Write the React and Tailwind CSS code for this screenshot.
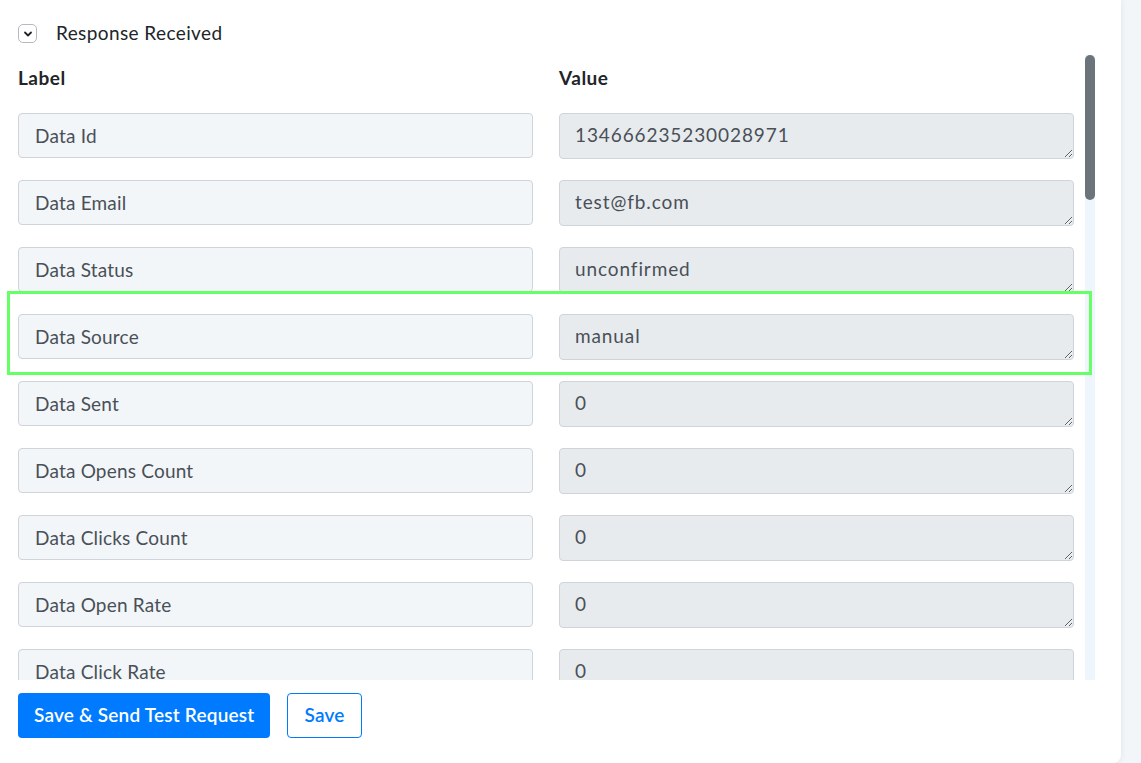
import React from 'react';

const rows = [
  { label: 'Data Id', value: '134666235230028971' },
  { label: 'Data Email', value: 'test@fb.com' },
  { label: 'Data Status', value: 'unconfirmed' },
  { label: 'Data Source', value: 'manual' },
  { label: 'Data Sent', value: '0' },
  { label: 'Data Opens Count', value: '0' },
  { label: 'Data Clicks Count', value: '0' },
  { label: 'Data Open Rate', value: '0' },
  { label: 'Data Click Rate', value: '0' },
];

function Chevron() {
  return (
    <svg width="10" height="10" viewBox="0 0 10 10" fill="none">
      <path d="M2 3.5 L5 6.5 L8 3.5" stroke="#1f2329" strokeWidth="1.8" strokeLinecap="round" strokeLinejoin="round" />
    </svg>
  );
}

export default function App() {
  return (
    <div
      className="relative flex h-[763px] w-[1141px] overflow-hidden bg-[#f3f6f9] text-[#212529]"
      style={{ fontFamily: 'Lato, "Open Sans", sans-serif' }}
    >
      <div className="flex w-[1121px] flex-col rounded-br-lg bg-white shadow-[0_0_6px_rgba(0,0,0,0.08)]">
        {/* Section toggle */}
        <div className="flex items-center gap-[19px] pl-[18px] pt-[24px]">
          <button className="flex h-[19px] w-[19px] items-center justify-center rounded-[5px] border border-[#b4bac1] bg-white">
            <Chevron />
          </button>
          <span className="-mt-[2px] text-[19px] leading-[18px] tracking-[0.4px]">Response Received</span>
        </div>

        {/* Field list with scrollbar */}
        <div className="mt-[12px] flex h-[625px] pl-[18px]">
          <div className="w-[1056px] overflow-hidden">
            <div className="mb-[23px] grid grid-cols-2 gap-x-[26px] pt-[11px] text-[19px] font-bold leading-[24px] tracking-[0.5px]">
              <span>Label</span>
              <span>Value</span>
            </div>
            <div className="flex flex-col gap-[21px]">
              {rows.map((r) => (
                <div key={r.label} className="grid grid-cols-2 gap-x-[26px]">
                  <input
                    readOnly
                    value={r.label}
                    className="h-[45px] rounded-[4px] border border-[#ced4da] bg-[#f3f6f9] px-[16px] text-[19px] tracking-[0.2px] text-[#495057] outline-none"
                  />
                  <textarea
                    readOnly
                    value={r.value}
                    className="h-[46px] resize-y rounded-[4px] border border-[#ced4da] bg-[#e8ebee] px-[15px] pt-[9px] text-[19px] leading-[24px] tracking-[0.9px] text-[#495057] outline-none"
                  />
                </div>
              ))}
            </div>
          </div>
          <div className="ml-[11px] w-[10px] bg-[#eef5fd]">
            <div className="h-[145px] rounded-full bg-[#6c737b]" />
          </div>
        </div>

        {/* Actions */}
        <div className="mt-[13px] flex gap-[17px] pl-[18px]">
          <button className="h-[45px] rounded-[4px] bg-[#007bff] px-[16px] text-[19px] font-semibold tracking-[0.2px] text-white">
            Save &amp; Send Test Request
          </button>
          <button className="h-[45px] rounded-[4px] border border-[#007bff] bg-white px-[16px] text-[19px] font-semibold tracking-[0.2px] text-[#007bff]">
            Save
          </button>
        </div>
      </div>

      {/* Highlighted row marker */}
      <div className="pointer-events-none absolute left-[7px] top-[291px] h-[84px] w-[1085px] border-[3px] border-[#66ff66]" />
    </div>
  );
}
